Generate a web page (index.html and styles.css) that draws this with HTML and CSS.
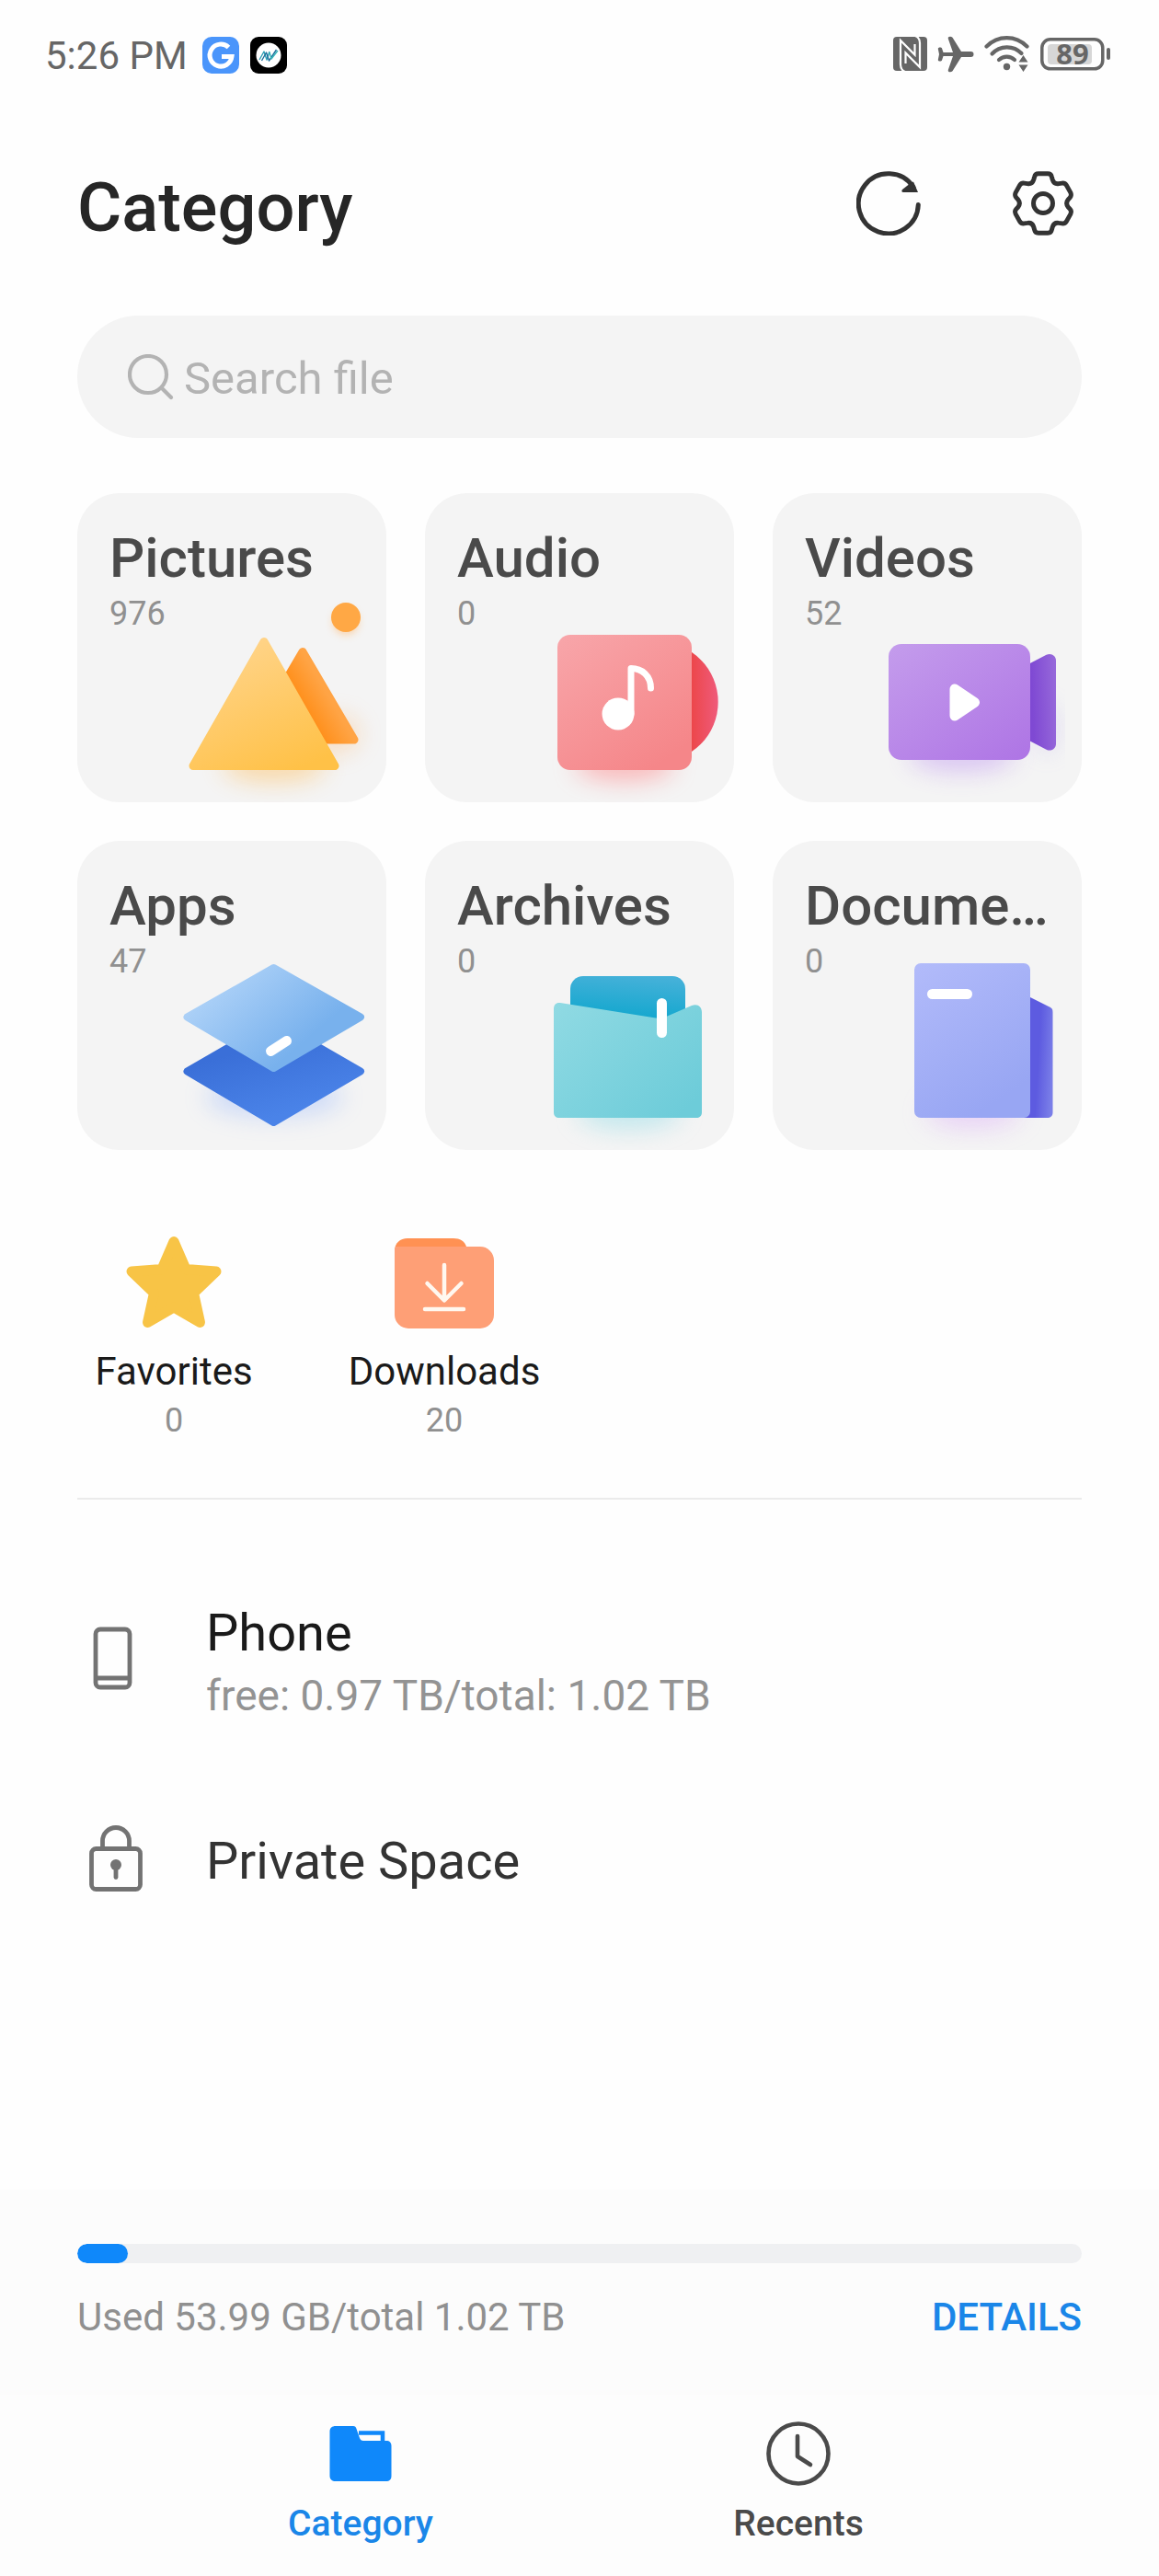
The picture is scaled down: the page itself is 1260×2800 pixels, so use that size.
FILE: index.html
```
<!DOCTYPE html>
<html lang="en">
<head>
    <meta charset="UTF-8">
    <meta name="viewport" content="width=device-width, initial-scale=1.0">
    <title>File Manager</title>
    <link rel="stylesheet" href="styles.css">
</head>
<body>
    <div class="status-bar">
        <div class="status-left">
            <span class="clock">5:26 PM</span>
            <svg class="app-badge" viewBox="0 0 40 40" width="40" height="40" aria-hidden="true">
                <rect width="40" height="40" rx="10" fill="#4a95fb"/>
                <path d="M28.5 11.5A12 12 0 1 0 32 21.5H21" fill="none" stroke="#fff" stroke-width="5"/>
            </svg>
            <svg class="app-badge" viewBox="0 0 40 40" width="40" height="40" aria-hidden="true">
                <rect width="40" height="40" rx="9" fill="#000"/>
                <circle cx="20" cy="20" r="13.5" fill="#fff"/>
                <g fill="none" stroke-width="1.4" stroke-linejoin="round">
                    <path d="M10 25l5-9 3 9 3-9" stroke="#2e9fb5"/>
                    <path d="M12.500 26l5-9 3 9 8-12" stroke="#1f6f9c"/>
                    <path d="M21 17l2 7 7-9" stroke="#35b3b8"/>
                </g>
            </svg>
        </div>
        <div class="status-right">
            <!-- nfc -->
            <svg viewBox="0 0 37 37" width="37" height="37" aria-hidden="true">
                <rect width="37" height="37" rx="4" fill="#666"/>
                <g fill="none" stroke="#fefefe" stroke-width="2.200">
                    <path d="M24 -1c4 1.500 5 4 5 8v26L13.500 17.500V29"/>
                    <path d="M13 38c-4-1.500-5-4-5-8V4l15.500 15.500V8"/>
                </g>
            </svg>
            <!-- airplane mode -->
            <svg viewBox="0 0 40 40" width="40" height="40" aria-hidden="true">
                <path d="M36.500 17H26L16.500 1.800C15 0 11 .5 11.800 3L17 18H6.500L5 13.500C4.500 12 .8 12 .8 14L2 20 .8 26c0 2 3.700 2 4.200.5L6.500 22H17L11.800 37c-.8 2.500 3.200 3 4.700 1.200L26 23h10.500a3 3 0 0 0 0-6z" fill="#666"/>
            </svg>
            <!-- wifi -->
            <svg viewBox="0 0 50 40" width="50" height="40" aria-hidden="true">
                <g fill="none" stroke="#666" stroke-width="4.200" stroke-linecap="round">
                    <path d="M2.500 11.500C15-1 34-1 46.500 11.500"/>
                    <path d="M8.500 19.500C17 10 32 10 40.500 19"/>
                    <path d="M16 26c5-4.500 12-4.500 17 0"/>
                </g>
                <circle cx="24.500" cy="33.500" r="3.700" fill="#666"/>
                <path d="M42.500 21l5 7.500h-10zM42.500 39l-5-7.500h10z" fill="#666"/>
            </svg>
            <svg class="battery" viewBox="0 0 76 36" width="76" height="36" role="img" aria-label="Battery">
                <rect x="1.800" y="1.800" width="66" height="32" rx="9" fill="none" stroke="#666" stroke-width="3.500"/>
                <rect x="8" y="7" width="48" height="22" rx="4" fill="#d6d6d6"/>
                <rect x="72" y="11" width="4" height="13" rx="2" fill="#666"/>
                <text x="35" y="29" text-anchor="middle">89</text>
            </svg>
        </div>
    </div>

    <header class="header">
        <h1>Category</h1>
        <div class="header-actions">
            <button type="button" aria-label="Refresh">
                <svg viewBox="0 0 70 70" width="70" height="70">
                    <path d="M67.300 36.500A32.500 32.500 0 1 1 62 17.500" fill="none" stroke="#333" stroke-width="5" stroke-linecap="round"/>
                    <path d="M67 23H51c-2 0-2-2-1-3l7-5.500 5-3z" fill="#333"/>
                </svg>
            </button>
            <button type="button" aria-label="Settings">
                <svg viewBox="1 0.300 68 68" width="70" height="70" fill="none" stroke="#333" stroke-width="4.800">
                    <path d="M30 3h10c2 0 3.500 1 4 3l1 3.500c1 3 3.500 4.500 6.500 4l3.500-.5c2-.3 3.500.5 4.500 2l4.500 8c1 2 .8 3.500-.5 5l-2 2.300c-2 2.500-2 5.500 0 8l2 2.300c1.300 1.500 1.500 3 .5 5l-4.500 8c-1 1.500-2.500 2.300-4.500 2l-3.500-.5c-3-.5-5.500 1-6.500 4l-1 3.500c-.5 2-2 3-4 3H30c-2 0-3.500-1-4-3l-1-3.500c-1-3-3.500-4.500-6.500-4l-3.500.5c-2 .3-3.500-.5-4.500-2l-4.500-8c-1-2-.8-3.500.5-5l2-2.300c2-2.500 2-5.500 0-8l-2-2.300c-1.300-1.500-1.500-3-.5-5l4.500-8c1-1.500 2.500-2.300 4.500-2l3.500.5c3 .5 5.500-1 6.500-4l1-3.500c.5-2 2-3 4-3z"/>
                    <circle cx="35" cy="34.300" r="10.200"/>
                </svg>
            </button>
        </div>
    </header>

    <main class="content">
        <label class="search">
            <svg viewBox="0 0 50 50" width="50" height="50" fill="none" stroke="#b3b3b3" stroke-width="4.200" stroke-linecap="round" aria-hidden="true">
                <circle cx="22" cy="22" r="20"/>
                <path d="M37 37l10 10"/>
            </svg>
            <input type="search" placeholder="Search file" aria-label="Search file">
        </label>

        <section class="tiles">
            <a class="tile" href="#pictures">
                <svg class="tile-art" viewBox="0 0 336 336" aria-hidden="true">
                    <defs>
                        <filter id="soft" x="-50%" y="-100%" width="200%" height="300%"><feGaussianBlur stdDeviation="13"/></filter>
                        <filter id="dot" x="-50%" y="-50%" width="200%" height="200%"><feGaussianBlur stdDeviation="4"/></filter>
                        <linearGradient id="pic1" x1="0.300" y1="0" x2="0.800" y2="1"><stop offset="0" stop-color="#ffd48a"/><stop offset="1" stop-color="#ffc147"/></linearGradient>
                        <linearGradient id="pic2" x1="0.450" y1="0.650" x2="0.750" y2="0.500"><stop offset="0" stop-color="#ff8a10"/><stop offset="1" stop-color="#ffa445"/></linearGradient>
                    </defs>
                    <ellipse cx="214" cy="296" rx="56" ry="18" fill="#ffb84d" opacity="0.450" filter="url(#soft)"/>
                    <ellipse cx="282" cy="262" rx="24" ry="20" fill="#ffb060" opacity="0.350" filter="url(#soft)"/>
                    <circle cx="292" cy="140" r="14" fill="#ffb060" opacity="0.500" filter="url(#dot)"/>
                    <circle cx="292" cy="135" r="16" fill="#ffa845"/>
                    <path d="M245 172.500L301 268H189z" fill="url(#pic2)" stroke="url(#pic2)" stroke-width="9" stroke-linejoin="round"/>
                    <path d="M203 161.500L280 296.500H126z" fill="url(#pic1)" stroke="url(#pic1)" stroke-width="9" stroke-linejoin="round"/>
                </svg>
                <span class="tile-text">
                    <span class="tile-name">Pictures</span>
                    <span class="tile-count">976</span>
                </span>
            </a>

            <a class="tile" href="#audio">
                <svg class="tile-art" viewBox="0 0 336 336" aria-hidden="true">
                    <defs>
                        <linearGradient id="aud1" x1="0" y1="0" x2="0.700" y2="1"><stop offset="0" stop-color="#f8a6aa"/><stop offset="1" stop-color="#f58689"/></linearGradient>
                        <linearGradient id="aud2" x1="0.750" y1="0" x2="1" y2="0"><stop offset="0" stop-color="#ec4444"/><stop offset="1" stop-color="#ef5b7b"/></linearGradient>
                    </defs>
                    <ellipse cx="217" cy="295" rx="54" ry="18" fill="#ff7d80" opacity="0.500" filter="url(#soft)"/>
                    <circle cx="253.500" cy="227" r="65.200" fill="url(#aud2)"/>
                    <rect x="144" y="154" width="146" height="147" rx="14" fill="url(#aud1)"/>
                    <circle cx="210" cy="240" r="17.500" fill="#fff"/>
                    <path d="M224 240V190.500c12 0 21.500 8 21.500 21.500" fill="none" stroke="#fff" stroke-width="7" stroke-linecap="round" stroke-linejoin="round"/>
                </svg>
                <span class="tile-text">
                    <span class="tile-name">Audio</span>
                    <span class="tile-count">0</span>
                </span>
            </a>

            <a class="tile" href="#videos">
                <svg class="tile-art" viewBox="0 0 336 336" aria-hidden="true">
                    <defs>
                        <linearGradient id="vid1" x1="0" y1="0" x2="0.900" y2="1"><stop offset="0" stop-color="#c49cec"/><stop offset="1" stop-color="#af76e5"/></linearGradient>
                        <linearGradient id="vid2" x1="0.200" y1="0.500" x2="1" y2="0.400"><stop offset="0" stop-color="#7f49d3"/><stop offset="1" stop-color="#9668da"/></linearGradient>
                    </defs>
                    <ellipse cx="206" cy="285" rx="58" ry="18" fill="#b98cf0" opacity="0.450" filter="url(#soft)"/>
                    <ellipse cx="298" cy="256" rx="10" ry="26" fill="#b0a0f0" opacity="0.350" filter="url(#soft)"/>
                    <path d="M276 187l21.500-11.200c5-2.500 10.500.7 10.500 6.200v90.500c0 5.500-5.500 8.700-10.500 6.200L276 267.500z" fill="url(#vid2)"/>
                    <rect x="126" y="164" width="154" height="126" rx="14" fill="url(#vid1)"/>
                    <path d="M198 213v29l21.500-14.500z" fill="#fff" stroke="#fff" stroke-width="11" stroke-linejoin="round"/>
                </svg>
                <span class="tile-text">
                    <span class="tile-name">Videos</span>
                    <span class="tile-count">52</span>
                </span>
            </a>

            <a class="tile" href="#apps">
                <svg class="tile-art" viewBox="0 0 336 336" aria-hidden="true">
                    <defs>
                        <linearGradient id="app1" x1="0.100" y1="0.300" x2="0.700" y2="0.700"><stop offset="0" stop-color="#abd0f7"/><stop offset="1" stop-color="#78b1ed"/></linearGradient>
                        <linearGradient id="app2" x1="0.300" y1="0.300" x2="0.600" y2="0.900"><stop offset="0" stop-color="#3a6fd8"/><stop offset="1" stop-color="#4a83e8"/></linearGradient>
                    </defs>
                    <ellipse cx="214" cy="278" rx="74" ry="22" fill="#84aaff" opacity="0.350" filter="url(#soft)"/>
                    <path d="M213.500 196L308 250.500l-94.500 55.500L119.500 250.500z" fill="url(#app2)" stroke="url(#app2)" stroke-width="8" stroke-linejoin="round"/>
                    <path d="M213.500 138L308 191.500l-94.500 55.500L119.500 191.500z" fill="url(#app1)" stroke="url(#app1)" stroke-width="8" stroke-linejoin="round"/>
                    <path d="M210.500 228.500l17-11" stroke="#fff" stroke-width="11" stroke-linecap="round"/>
                </svg>
                <span class="tile-text">
                    <span class="tile-name">Apps</span>
                    <span class="tile-count">47</span>
                </span>
            </a>

            <a class="tile" href="#archives">
                <svg class="tile-art" viewBox="0 0 336 336" aria-hidden="true">
                    <defs>
                        <linearGradient id="arc1" x1="0" y1="0" x2="1" y2="0.800"><stop offset="0" stop-color="#90dae3"/><stop offset="1" stop-color="#6dccd9"/></linearGradient>
                        <linearGradient id="arc2" x1="0.600" y1="0" x2="0.500" y2="0.700"><stop offset="0" stop-color="#45b1d9"/><stop offset="1" stop-color="#13a7ce"/></linearGradient>
                    </defs>
                    <ellipse cx="222" cy="295" rx="56" ry="18" fill="#8fdbe6" opacity="0.500" filter="url(#soft)"/>
                    <rect x="158" y="147" width="125" height="66" rx="14" fill="url(#arc2)"/>
                    <path d="M147 176l107 17c2 .3 4 0 6-1l30-13c6-2.500 11 1 11 7v109c0 4-2.500 6-6 6H146c-3.500 0-6-2-6-6V183c0-5 2.500-7.500 7-7z" fill="url(#arc1)"/>
                    <rect x="252" y="171" width="11" height="43" rx="5.500" fill="#fff"/>
                </svg>
                <span class="tile-text">
                    <span class="tile-name">Archives</span>
                    <span class="tile-count">0</span>
                </span>
            </a>

            <a class="tile" href="#documents">
                <svg class="tile-art" viewBox="0 0 336 336" aria-hidden="true">
                    <defs>
                        <linearGradient id="doc1" x1="0" y1="0" x2="0.500" y2="1"><stop offset="0" stop-color="#b2bbfa"/><stop offset="1" stop-color="#98a6f3"/></linearGradient>
                        <linearGradient id="doc2" x1="0.550" y1="0.500" x2="1" y2="0.600"><stop offset="0" stop-color="#5d5be0"/><stop offset="1" stop-color="#7a7ee8"/></linearGradient>
                    </defs>
                    <ellipse cx="218" cy="295" rx="52" ry="18" fill="#e0b8f8" opacity="0.550" filter="url(#soft)"/>
                    <path d="M270 165l31 15.500c2.500 1.300 3.500 2.500 3.500 5.500v109c0 4-2.500 6-6 6H270z" fill="url(#doc2)"/>
                    <rect x="154" y="133" width="126" height="168" rx="7" fill="url(#doc1)"/>
                    <rect x="168" y="161" width="49" height="11" rx="5.500" fill="#fff"/>
                </svg>
                <span class="tile-text">
                    <span class="tile-name">Documents</span>
                    <span class="tile-count">0</span>
                </span>
            </a>
        </section>

        <section class="shortcuts">
            <a class="shortcut" href="#favorites">
                <svg viewBox="0 0 108 108" width="108" height="108" aria-hidden="true">
                    <path d="M54 9.500L67 39.500 100 42 75.500 65.500 82.500 97.500 54 81 25.500 97.500 32.500 65.500 8 42 41 39.500z" fill="#f8c446" stroke="#f8c446" stroke-width="11" stroke-linejoin="round"/>
                </svg>
                <span class="shortcut-name">Favorites</span>
                <span class="shortcut-count">0</span>
            </a>
            <a class="shortcut" href="#downloads">
                <svg viewBox="0 0 108 108" width="108" height="108" aria-hidden="true">
                    <path d="M0 30V20C0 11 6 6 14 6h50c7 0 12 3 14 9v15z" fill="#ff9153"/>
                    <path d="M1 15h92a15 15 0 0 1 15 15v59a15 15 0 0 1-15 15H15a15 15 0 0 1-15-15V18z" fill="#fe9f76"/>
                    <path d="M54 35v38M35.500 55L54 73.500 72.500 55M33 83h42" fill="none" stroke="#fff8f0" stroke-width="4.500" stroke-linecap="round" stroke-linejoin="round"/>
                </svg>
                <span class="shortcut-name">Downloads</span>
                <span class="shortcut-count">20</span>
            </a>
        </section>

        <section class="locations">
            <a class="location" href="#phone">
                <svg viewBox="0 0 84 84" width="84" height="84" fill="none" stroke="#737373" stroke-width="4.800" aria-hidden="true">
                    <rect x="20" y="4" width="37" height="63" rx="5"/>
                    <path d="M20 57h37"/>
                </svg>
                <span class="location-text">
                    <span class="location-name strong">Phone</span>
                    <span class="location-info">free: 0.97 TB/total: 1.02 TB</span>
                </span>
            </a>
            <a class="location" href="#private">
                <svg viewBox="0 0 84 84" width="84" height="84" fill="none" stroke="#737373" stroke-width="4.800" aria-hidden="true">
                    <rect x="15.500" y="28.500" width="53" height="44" rx="5"/>
                    <path d="M27.500 28V20a14.500 14.500 0 0 1 29 0v8"/>
                    <circle cx="42" cy="46" r="6" fill="#737373" stroke="none"/>
                    <path d="M42 48v11.500" stroke-linecap="round"/>
                </svg>
                <span class="location-text">
                    <span class="location-name">Private Space</span>
                </span>
            </a>
        </section>
    </main>

    <footer class="footer">
        <div class="storage">
            <div class="storage-bar">
                <div class="storage-used" style="width: 5%"></div>
            </div>
            <div class="storage-row">
                <span>Used 53.99 GB/total 1.02 TB</span>
                <a href="#details">DETAILS</a>
            </div>
        </div>
        <nav class="tabs">
            <a class="tab active" href="#category">
                <svg viewBox="0 0 72 72" width="72" height="72" aria-hidden="true">
                    <path d="M9 6h19c2 0 3 1 3.500 3l3.500 10c.7 2 2 3 4 3h25c3.500 0 5.500 2 5.500 5.500V60c0 4-2 6-6 6H9c-4 0-6.500-2-6.500-6V12c0-4 2.500-6 6.500-6z" fill="#0f88fa"/>
                    <path d="M34 13.500h26V24" fill="none" stroke="#0f88fa" stroke-width="4.500"/>
                </svg>
                Category
            </a>
            <a class="tab" href="#recents">
                <svg viewBox="0 0 72 72" width="72" height="72" fill="none" stroke="#4a4a4a" stroke-width="4.600" stroke-linecap="round" stroke-linejoin="round" aria-hidden="true">
                    <circle cx="36" cy="36" r="32.500"/>
                    <path d="M35 17v22l14 9"/>
                </svg>
                Recents
            </a>
        </nav>
    </footer>
</body>
</html>
```

FILE: styles.css
```
* {
    box-sizing: border-box;
}

body {
    margin: 0;
    min-height: 100vh;
    display: flex;
    flex-direction: column;
    font-family: Roboto, "Noto Sans", sans-serif;
    background-color: #fefefe;
    color: #333;
}

a {
    color: inherit;
    text-decoration: none;
}

svg {
    display: block;
    flex-shrink: 0;
}

/* status bar */
.status-bar {
    display: flex;
    justify-content: space-between;
    align-items: center;
    height: 120px;
    padding: 0 53px 0 49px;
}

.status-left {
    display: flex;
    align-items: center;
    gap: 12px;
}

.clock {
    margin-right: 4px;
    font-size: 42px;
    color: #666;
}

.status-right {
    display: flex;
    align-items: center;
    gap: 11px;
    padding-bottom: 3px;
}

.battery {
    overflow: visible;
}

.battery text {
    font-family: "Noto Sans", sans-serif;
    font-size: 31px;
    font-weight: 700;
    fill: #666;
}

/* header */
.header {
    display: flex;
    justify-content: space-between;
    align-items: center;
    padding: 64px 91px 75px 84px;
}

.header h1 {
    margin: 0;
    font-size: 74px;
    line-height: 84px;
    font-weight: 500;
    color: #262626;
}

.header-actions {
    display: flex;
    gap: 98px;
}

.header-actions button {
    padding: 0 0 10px;
    border: none;
    background: none;
    cursor: pointer;
}

.content {
    padding: 0 84px 60px;
}

.search {
    display: flex;
    align-items: center;
    gap: 11px;
    height: 133px;
    padding: 0 55px;
    border-radius: 67px;
    background-color: #f4f4f4;
}

.search input {
    flex: 1;
    min-width: 0;
    padding: 4px 0 0;
    border: none;
    outline: none;
    background: none;
    font-family: inherit;
    font-size: 49px;
    line-height: 60px;
    color: #333;
}

.search input::placeholder {
    color: #b3b3b3;
    opacity: 1;
}

/* category tiles */
.tiles {
    display: grid;
    grid-template-columns: repeat(3, minmax(0, 1fr));
    gap: 42px;
    margin-top: 60px;
}

.tile {
    display: grid;
    border-radius: 46px;
    background-color: #f4f4f4;
    overflow: hidden;
}

/* picture and text share one cell */
.tile-art,
.tile-text {
    grid-area: 1 / 1;
    min-width: 0;
}

.tile-art {
    width: 100%;
}

.tile-text {
    z-index: 1;
    display: flex;
    flex-direction: column;
    padding: 35px;
}

.tile-name {
    font-size: 60px;
    line-height: 72px;
    font-weight: 500;
    color: #4a4a4a;
    white-space: nowrap;
    overflow: hidden;
    text-overflow: ellipsis;
}

.tile-count {
    font-size: 36px;
    line-height: 48px;
    color: #909090;
}

/* shortcuts */
.shortcuts {
    display: grid;
    grid-template-columns: repeat(4, minmax(0, 1fr));
    gap: 84px;
    margin-top: 90px;
    padding-bottom: 59px;
    border-bottom: 2px solid #ebebeb;
}

.shortcut {
    display: flex;
    flex-direction: column;
    align-items: center;
}

.shortcut-name {
    margin-top: 15px;
    font-size: 42px;
    line-height: 56px;
    color: #1a1a1a;
}

.shortcut-count {
    font-size: 36px;
    line-height: 50px;
    color: #909090;
}

/* storage locations */
.locations {
    display: flex;
    flex-direction: column;
    gap: 104px;
    margin-top: 111px;
}

.location {
    display: flex;
    align-items: center;
    gap: 56px;
}

.location-text {
    display: flex;
    flex-direction: column;
}

.location-name {
    font-size: 56px;
    line-height: 68px;
    color: #333;
}

.location-name.strong {
    color: #1a1a1a;
}

.location-info {
    font-size: 46px;
    line-height: 68px;
    color: #939393;
}

/* footer */
.footer {
    margin-top: auto;
    background-color: #fcfcfc;
}

.storage {
    padding: 59px 84px 56px;
}

.storage-bar {
    height: 21px;
    border-radius: 11px;
    background-color: #eff0f2;
    overflow: hidden;
}

.storage-used {
    height: 100%;
    border-radius: 11px;
    background-color: #0f88fa;
}

.storage-row {
    display: flex;
    justify-content: space-between;
    margin-top: 31px;
    font-size: 42px;
    line-height: 56px;
    color: #909090;
}

.storage-row a {
    font-weight: 500;
    color: #1a86e8;
}

.tabs {
    display: flex;
    padding: 28px 154px 32px;
    background-color: #fdfdfd;
}

.tab {
    flex: 1;
    display: flex;
    flex-direction: column;
    align-items: center;
    gap: 15px;
    font-size: 39px;
    line-height: 50px;
    font-weight: 500;
    color: #4a4a4a;
}

.tab.active {
    color: #1a86e8;
}
```
